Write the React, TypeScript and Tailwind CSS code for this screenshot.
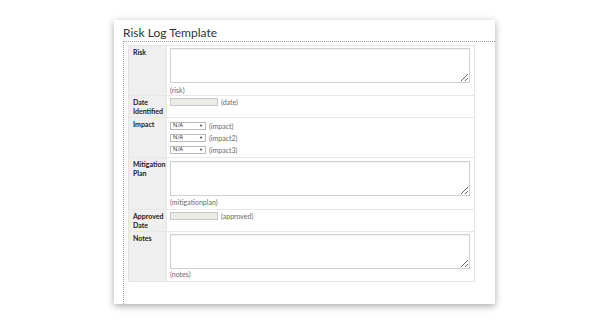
import type { ReactNode } from "react";

const font = { fontFamily: "Lato, 'Open Sans', sans-serif" };

function Label({ children }: { children: ReactNode }) {
  return (
    <div className="w-[38px] shrink-0 border-r border-[#e6e6e6] bg-[#efefef] px-[4px] pt-[2px] text-[7px] font-bold leading-[9px] text-[#222]">
      {children}
    </div>
  );
}

function Hint({ children }: { children: ReactNode }) {
  return <span className="text-[7px] leading-[8px] text-[#6a6a6a]">{children}</span>;
}

function AreaRow({ label, hint, pt, mt, pb }: { label: ReactNode; hint: string; pt: string; mt: string; pb: string }) {
  return (
    <div className="flex border-t border-[#e8e8e8] first:border-t-0">
      <Label>{label}</Label>
      <div className={`flex flex-col pl-[3px] ${pt} ${pb}`}>
        <textarea className="block h-[35px] w-[300px] border border-[#d0d0d0] bg-white shadow-[inset_0_1px_1px_rgba(0,0,0,0.05)]" />
        <div className={`h-[8px] ${mt} flex items-center`}>
          <Hint>{hint}</Hint>
        </div>
      </div>
    </div>
  );
}

function DateRow({ label, hint }: { label: ReactNode; hint: string }) {
  return (
    <div className="flex h-[22px] border-t border-[#e8e8e8]">
      <Label>{label}</Label>
      <div className="flex items-start gap-[3px] pl-[3px] pt-[2px]">
        <div className="h-[8px] w-[48px] border border-[#c8c8c8] bg-[#ecebe5]" />
        <div className="flex h-[8px] items-center">
          <Hint>{hint}</Hint>
        </div>
      </div>
    </div>
  );
}

function Select({ hint }: { hint: string }) {
  return (
    <div className="flex items-center gap-[3px]">
      <div className="flex h-[8px] w-[36px] items-center justify-between border border-[#b8b8b8] bg-white pl-[2px] pr-[2px] text-[5.5px] leading-none text-[#222]">
        <span>N/A</span>
        <span className="text-[4px]">▼</span>
      </div>
      <Hint>{hint}</Hint>
    </div>
  );
}

export default function App() {
  return (
    <div className="h-[326px] w-[610px] bg-white pl-[114px] pt-[20px]" style={font}>
      <div className="flex h-[284px] w-[381px] flex-col bg-white shadow-[0_2px_7px_rgba(0,0,0,0.35)]">
        <div className="pb-[1px] pl-[9px] pt-[6px] text-[12px] leading-[14px] text-[#333]">Risk Log Template</div>
        <div className="ml-[9px] flex-1 border-l border-t border-dotted border-[#9a9a9a] pl-[4px] pt-[3px]">
          <div className="w-[347px] border border-[#e4e4e4]">
            <AreaRow label="Risk" hint="(risk)" pt="pt-[2px]" mt="mt-[3px]" pb="pb-[1px]" />
            <DateRow
              label={
                <>
                  Date
                  <br />
                  Identified
                </>
              }
              hint="(date)"
            />
            <div className="flex h-[40px] border-t border-[#e8e8e8]">
              <Label>Impact</Label>
              <div className="flex flex-col gap-[4px] pl-[3px] pt-[4px]">
                <Select hint="(impact)" />
                <Select hint="(impact2)" />
                <Select hint="(impact3)" />
              </div>
            </div>
            <div className="border-t border-[#e8e8e8]">
              <AreaRow
                label={
                  <>
                    Mitigation
                    <br />
                    Plan
                  </>
                }
                hint="(mitigationplan)"
                pt="pt-[3px]"
                mt="mt-[2px]"
                pb="pb-[3px]"
              />
            </div>
            <DateRow
              label={
                <>
                  Approved
                  <br />
                  Date
                </>
              }
              hint="(approved)"
            />
            <div className="border-t border-[#e8e8e8]">
              <AreaRow label="Notes" hint="(notes)" pt="pt-[2px]" mt="mt-[1px]" pb="pb-[3px]" />
            </div>
          </div>
        </div>
      </div>
    </div>
  );
}
